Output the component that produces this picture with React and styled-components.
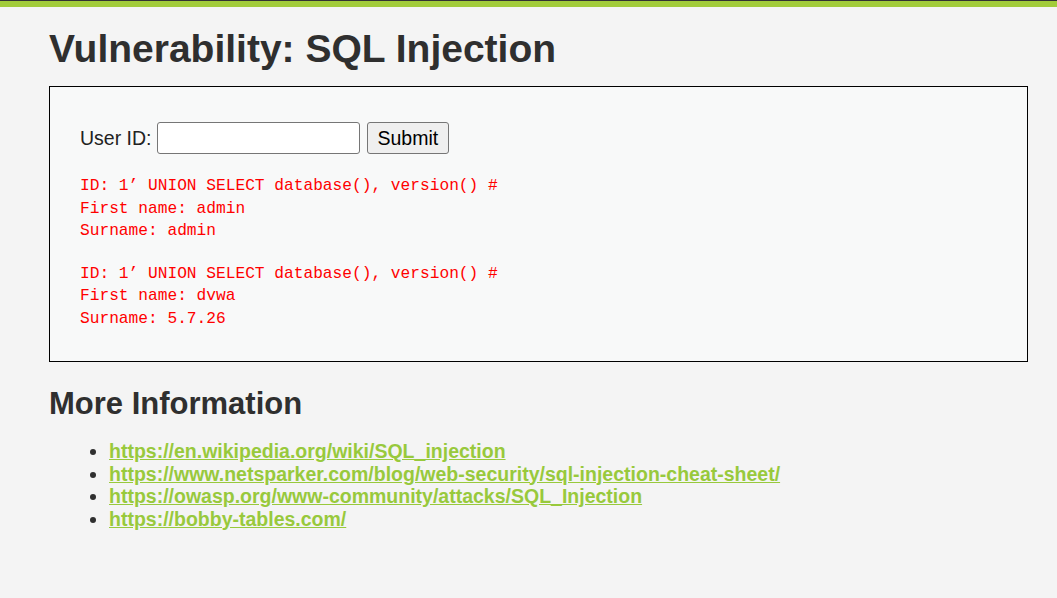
import React from 'react';
import styled, { createGlobalStyle } from 'styled-components';

const GlobalStyle = createGlobalStyle`
  html, body {
    margin: 0;
    padding: 0;
    background: #f4f4f4;
    font-family: "Liberation Sans", Arial, sans-serif;
    color: #2f2f2f;
  }
`;

const Page = styled.div`
  min-height: 598px;
`;

const TopBar = styled.div`
  height: 6px;
  border-top: 1px solid #333;
  background: #a2cc3a;
`;

const Main = styled.div`
  padding: 0 29px 0 49px;
`;

const Title = styled.h1`
  font-size: 39px;
  font-weight: bold;
  margin: 20px 0 15px;
  line-height: 44px;
  color: #2f2f2f;
`;

const Box = styled.div`
  background: #f8f9f9;
  border: 1px solid #000;
  padding: 35px 30px 31px;
`;

const Form = styled.form`
  display: flex;
  align-items: center;
  gap: 5px;
  font-size: 19.5px;
  color: #222;
`;

const Input = styled.input`
  width: 199px;
  height: 28px;
  border: 1px solid #767676;
  border-radius: 3px;
  background: #fff;
  padding: 1px;
  margin: 0;
  font-size: 19.5px;
`;

const Button = styled.button`
  height: 32px;
  padding: 0 10px;
  margin-left: 2px;
  font-family: "Liberation Sans", Arial, sans-serif;
  font-size: 19.5px;
  color: #000;
  background: #efefef;
  border: 1px solid #767676;
  border-radius: 3px;
`;

const Result = styled.pre`
  margin: 21px 0 0;
  font-family: "Liberation Mono", "Noto Sans CJK SC", monospace;
  font-size: 16.2px;
  line-height: 22.5px;
  color: #ff0000;
  & + & {
    margin-top: 20px;
  }
`;

const Subtitle = styled.h2`
  font-size: 31px;
  font-weight: bold;
  margin: 24px 0 18px;
  line-height: 36px;
  color: #2f2f2f;
`;

const Links = styled.ul`
  margin: 0;
  padding-left: 60px;
  font-size: 19.5px;
  line-height: 22.5px;
`;

const Link = styled.a`
  color: #98c93c;
  font-weight: bold;
  text-decoration: underline;
`;

const results = [
  { id: "1’ UNION SELECT database(), version() #", first: 'admin', last: 'admin' },
  { id: "1’ UNION SELECT database(), version() #", first: 'dvwa', last: '5.7.26' },
];

const links = [
  'https://en.wikipedia.org/wiki/SQL_injection',
  'https://www.netsparker.com/blog/web-security/sql-injection-cheat-sheet/',
  'https://owasp.org/www-community/attacks/SQL_Injection',
  'https://bobby-tables.com/',
];

export default function App() {
  return (
    <Page>
      <GlobalStyle />
      <TopBar />
      <Main>
        <Title>Vulnerability: SQL Injection</Title>
        <Box>
          <Form onSubmit={(e) => e.preventDefault()}>
            User ID:
            <Input type="text" name="id" />
            <Button type="submit">Submit</Button>
          </Form>
          {results.map((r, i) => (
            <Result key={i}>{`ID: ${r.id}\nFirst name: ${r.first}\nSurname: ${r.last}`}</Result>
          ))}
        </Box>
        <Subtitle>More Information</Subtitle>
        <Links>
          {links.map((l) => (
            <li key={l}>
              <Link href={l}>{l}</Link>
            </li>
          ))}
        </Links>
      </Main>
    </Page>
  );
}
